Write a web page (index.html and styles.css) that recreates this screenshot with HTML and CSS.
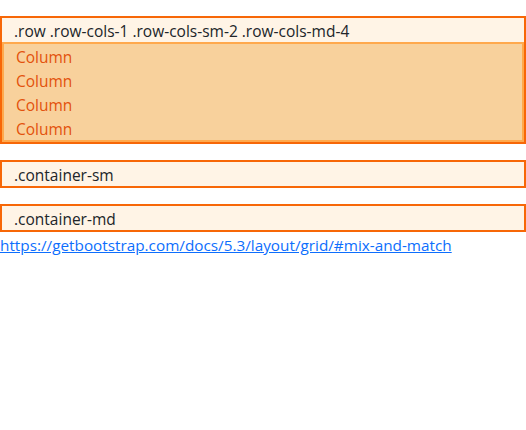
FILE: index.html
```html
<!DOCTYPE html>
<html lang="en">
<head>
<meta charset="utf-8">
<title>Mix and match</title>
<link rel="stylesheet" href="styles.css">
</head>
<body>
<div class="page">
  <div class="box">
    <div class="label">.row .row-cols-1 .row-cols-sm-2 .row-cols-md-4</div>
    <div class="row">
      <div class="col">Column</div>
      <div class="col">Column</div>
      <div class="col">Column</div>
      <div class="col">Column</div>
    </div>
  </div>
  <div class="box">
    <div class="label">.container-sm</div>
  </div>
  <div class="box">
    <div class="label">.container-md</div>
  </div>
</div>
<a class="link" href="https://getbootstrap.com/docs/5.3/layout/grid/#mix-and-match">https://getbootstrap.com/docs/5.3/layout/grid/#mix-and-match</a>
</body>
</html>
```
FILE: styles.css
```css
html, body {
  margin: 0;
  padding: 0;
  background: #fff;
}
body {
  font-family: "Open Sans", "Noto Sans", sans-serif;
  font-size: 15.5px;
  line-height: 24px;
  color: #212529;
}
.page {
  display: flex;
  flex-direction: column;
  gap: 16px;
  padding-top: 16px;
}
.box {
  border: 2px solid #f76707;
  background: #fff4e6;
}
.label {
  padding: 1px 12px 0;
  height: 24px;
  box-sizing: border-box;
}
.row {
  border: 2px solid #ffa94d;
  background: #f8d19c;
  display: flex;
  flex-direction: column;
}
.col {
  padding: 1px 12px 0;
  height: 24px;
  box-sizing: border-box;
  color: #e3520c;
}
.link {
  display: block;
  color: #0d6efd;
  text-decoration: underline;
  padding-top: 1px;
  font-size: 15.3px;
}
```
